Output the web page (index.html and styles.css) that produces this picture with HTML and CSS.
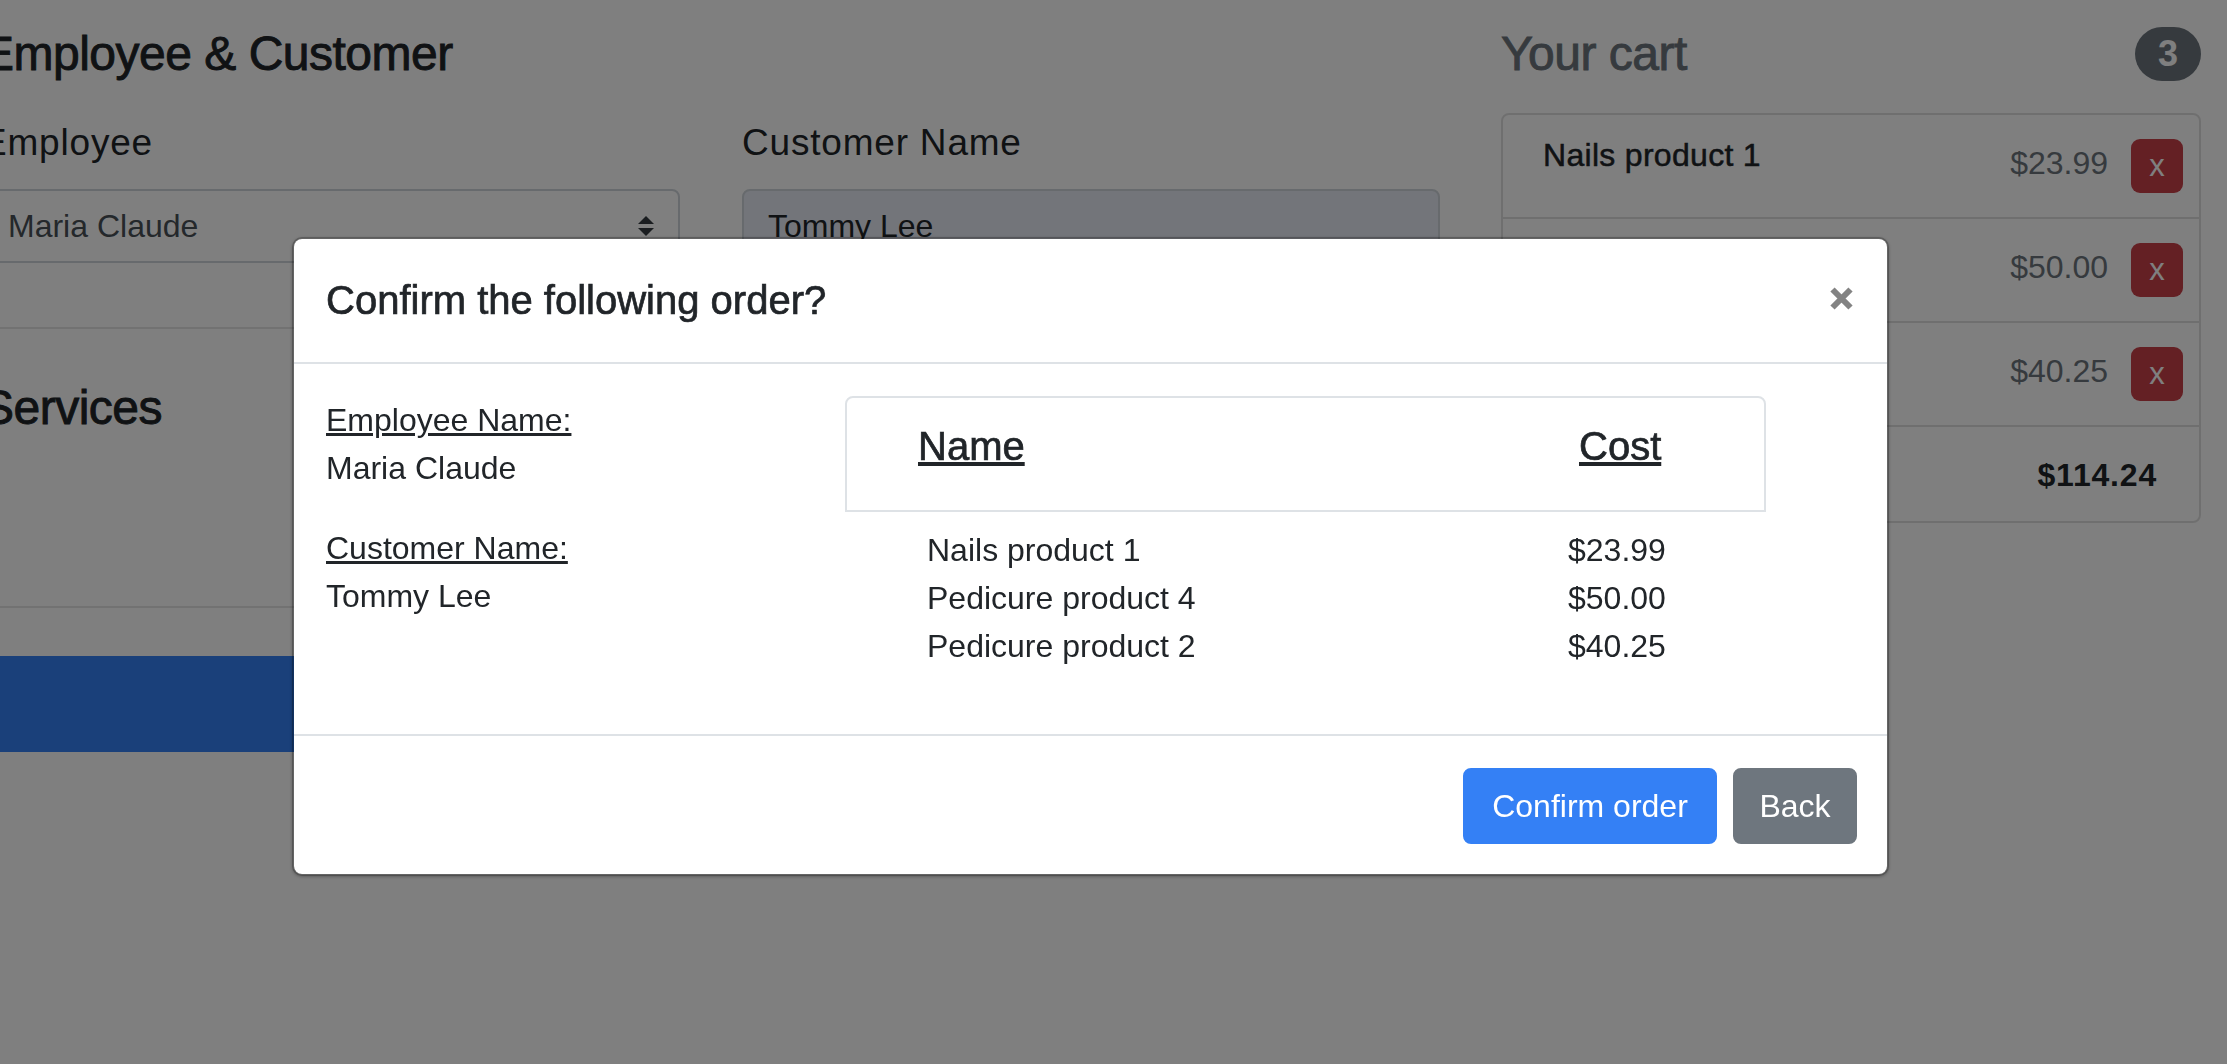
FILE: index.html
```html
<!DOCTYPE html>
<html lang="en">
<head>
<meta charset="utf-8">
<title>Checkout</title>
<link rel="stylesheet" href="styles.css">
</head>
<body>
<div class="page">
  <div class="main-col">
    <h4 class="section-title top-title">Employee &amp; Customer</h4>
    <div class="form-row">
      <div class="form-group">
        <label class="form-label">Employee</label>
        <div class="select">
          <span>Maria Claude</span>
          <svg class="select-arrows" width="16" height="20" viewBox="0 0 16 20"><path d="M8 0 L16 8 H0 Z M0 12 H16 L8 20 Z" fill="#343a40"/></svg>
        </div>
      </div>
      <div class="form-group">
        <label class="form-label">Customer Name</label>
        <div class="input">Tommy Lee</div>
      </div>
    </div>
    <hr class="divider divider-first">
    <h4 class="section-title">Services</h4>
    <div class="services-body"></div>
    <hr class="divider divider-second">
    <button class="btn-checkout">Checkout</button>
  </div>
  <aside class="cart-col">
    <h4 class="cart-heading"><span class="cart-title">Your cart</span><span class="badge">3</span></h4>
    <ul class="cart-list">
      <li class="cart-item">
        <h6 class="item-name">Nails product 1</h6>
        <div class="item-right"><span class="item-price">$23.99</span><button class="btn-remove">x</button></div>
      </li>
      <li class="cart-item">
        <h6 class="item-name">Pedicure product 4</h6>
        <div class="item-right"><span class="item-price">$50.00</span><button class="btn-remove">x</button></div>
      </li>
      <li class="cart-item">
        <h6 class="item-name">Pedicure product 2</h6>
        <div class="item-right"><span class="item-price">$40.25</span><button class="btn-remove">x</button></div>
      </li>
      <li class="cart-total"><span>Total (USD)</span><strong>$114.24</strong></li>
    </ul>
  </aside>
</div>

<div class="backdrop"></div>

<div class="modal" role="dialog">
  <div class="modal-header">
    <h5 class="modal-title">Confirm the following order?</h5>
    <svg class="close-icon" width="25" height="25" viewBox="0 0 25 25"><path d="M3.5 3.5 L21.5 21.5 M21.5 3.5 L3.5 21.5" stroke="#838383" stroke-width="6" fill="none"/></svg>
  </div>
  <div class="modal-body">
    <div class="people">
      <p><u>Employee Name:</u><br>Maria Claude</p>
      <p><u>Customer Name:</u><br>Tommy Lee</p>
    </div>
    <div class="order">
      <div class="order-head"><h5>Name</h5><h5>Cost</h5></div>
      <div class="order-items">
        <div class="order-row"><span>Nails product 1</span><span>$23.99</span></div>
        <div class="order-row"><span>Pedicure product 4</span><span>$50.00</span></div>
        <div class="order-row"><span>Pedicure product 2</span><span>$40.25</span></div>
      </div>
    </div>
  </div>
  <div class="modal-footer">
    <button class="btn btn-primary">Confirm order</button>
    <button class="btn btn-secondary">Back</button>
  </div>
</div>
</body>
</html>
```

FILE: styles.css
```css
* { box-sizing: border-box; }

html, body { margin: 0; padding: 0; }

body {
  width: 2227px;
  height: 1064px;
  overflow: hidden;
  position: relative;
  font-family: "Liberation Sans", Arial, sans-serif;
  font-size: 32px;
  line-height: 48px;
  color: #212529;
  background: #fff;
}

/* ---------- background page ---------- */
.page {
  display: flex;
  gap: 61px;
  margin-left: -18px;
  padding-top: 25px;
}

.main-col {
  width: 1458px;
  flex: none;
  display: flex;
  flex-direction: column;
}

.cart-col {
  width: 700px;
  flex: none;
}

.section-title {
  margin: 0;
  font-size: 48px;
  line-height: 58px;
  font-weight: 500;
  letter-spacing: -0.5px;
  -webkit-text-stroke: 0.9px currentColor;
}

.top-title { margin-bottom: 37px; }

.form-row {
  display: grid;
  grid-template-columns: 698px 698px;
  column-gap: 62px;
}

.form-group { margin-bottom: 32px; }

.form-label {
  display: block;
  font-size: 37px;
  line-height: 45px;
  letter-spacing: 0.8px;
  margin-bottom: 24px;
}

.select, .input {
  height: 74px;
  border: 2px solid #ced4da;
  border-radius: 8px;
  padding: 0 24px;
  display: flex;
  align-items: center;
}

.select {
  justify-content: space-between;
  color: #495057;
}

.input {
  background: #e6eaf4;
  color: #212529;
}

.divider {
  height: 0;
  border: 0;
  border-top: 2px solid rgba(0, 0, 0, 0.1);
  margin: 0;
}

.divider-first { margin: 32px 0 50px; }
.divider-second { margin: 32px 0 48px; }

.services-body { height: 137px; }

.btn-checkout {
  height: 96px;
  width: 100%;
  border: 0;
  border-radius: 10px;
  background: #3480f5;
  color: #fff;
  font-family: inherit;
  font-size: 40px;
}

.cart-heading {
  display: flex;
  justify-content: space-between;
  align-items: center;
  height: 58px;
  margin: 0 0 30px;
  font-weight: normal;
}

.cart-title {
  font-size: 48px;
  line-height: 58px;
  font-weight: 500;
  letter-spacing: -0.5px;
  color: #6c757d;
  -webkit-text-stroke: 0.9px currentColor;
}

.badge {
  background: #6c757d;
  color: #fff;
  font-size: 36px;
  line-height: 36px;
  font-weight: 700;
  padding: 9px 23px;
  border-radius: 999px;
}

.cart-list {
  list-style: none;
  margin: 0;
  padding: 0;
  border: 2px solid rgba(0, 0, 0, 0.125);
  border-radius: 8px;
}

.cart-list > li + li { border-top: 2px solid rgba(0, 0, 0, 0.125); }

.cart-item {
  display: flex;
  justify-content: space-between;
  align-items: flex-start;
  padding: 24px 16px 24px 40px;
}

.item-name {
  margin: 0;
  font-size: 32px;
  line-height: 33px;
  font-weight: 500;
  letter-spacing: 0.3px;
  -webkit-text-stroke: 0.5px currentColor;
}

.item-right {
  display: flex;
  align-items: flex-start;
  gap: 23px;
}

.item-price {
  color: #6c757d;
  line-height: 48px;
}

.btn-remove {
  width: 52px;
  height: 54px;
  padding: 0;
  border: 0;
  border-radius: 9px;
  background: #c94049;
  color: #fff;
  font-family: inherit;
  font-size: 31px;
  line-height: 54px;
  text-align: center;
}

.cart-total {
  display: flex;
  justify-content: space-between;
  padding: 24px 42px 22px 40px;
}

.cart-total strong {
  font-weight: 700;
  letter-spacing: 0.8px;
}

/* ---------- backdrop + modal ---------- */
.backdrop {
  position: fixed;
  inset: 0;
  background: rgba(0, 0, 0, 0.5);
  z-index: 10;
}

.modal {
  position: absolute;
  left: 292px;
  top: 237px;
  width: 1597px;
  z-index: 20;
  background: #fff;
  background-clip: padding-box;
  border: 2px solid rgba(0, 0, 0, 0.2);
  border-radius: 10px;
  box-shadow: 0 1px 3px rgba(0, 0, 0, 0.25);
}

.modal-header {
  display: flex;
  align-items: flex-start;
  justify-content: space-between;
  padding: 31px 33px 32px 32px;
  border-bottom: 2px solid #dee2e6;
}

.modal-title {
  margin: 0;
  font-size: 40px;
  line-height: 60px;
  font-weight: 500;
  -webkit-text-stroke: 0.7px currentColor;
}

.close-icon {
  margin-top: 16px;
  flex: none;
}

.modal-body {
  display: flex;
  padding: 32px;
}

.people {
  width: 519px;
  flex: none;
}

.people p { margin: 0 0 32px; }

.order {
  width: 921px;
  flex: none;
}

.order-head {
  display: grid;
  grid-template-columns: 661px 1fr;
  padding: 24px 0 40px 71px;
  border: 2px solid #dee2e6;
  border-radius: 8px 8px 0 0;
}

.order-head h5 {
  margin: 0;
  font-size: 40px;
  line-height: 48px;
  font-weight: 500;
  text-decoration: underline;
  -webkit-text-stroke: 0.7px currentColor;
}

.order-items {
  margin: 14px 0 32px;
  padding-left: 82px;
}

.order-row {
  display: grid;
  grid-template-columns: 641px 1fr;
}

.modal-footer {
  display: flex;
  justify-content: flex-end;
  gap: 16px;
  padding: 32px 30px 30px;
  border-top: 2px solid #dee2e6;
}

.btn {
  height: 76px;
  padding: 0;
  border: 2px solid transparent;
  border-radius: 8px;
  font-family: inherit;
  font-size: 32px;
  line-height: 48px;
  color: #fff;
  text-align: center;
}

.btn-primary {
  width: 254px;
  background: #3480f5;
  border-color: #3480f5;
}

.btn-secondary {
  width: 124px;
  background: #6e767e;
  border-color: #6e767e;
}
```
